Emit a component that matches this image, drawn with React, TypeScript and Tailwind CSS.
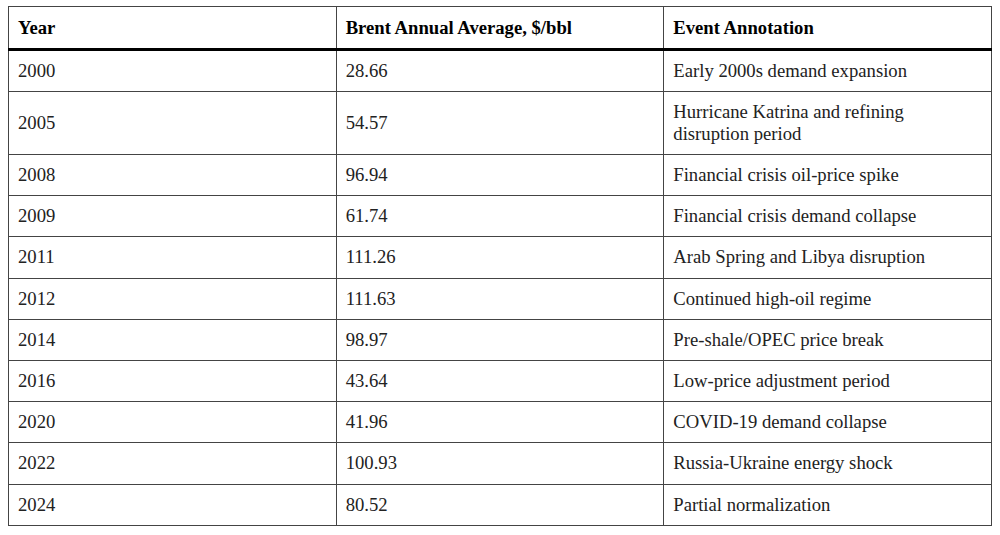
import React from "react";

const rows: [string, string, string][] = [
  ["2000", "28.66", "Early 2000s demand expansion"],
  ["2005", "54.57", "Hurricane Katrina and refining disruption period"],
  ["2008", "96.94", "Financial crisis oil-price spike"],
  ["2009", "61.74", "Financial crisis demand collapse"],
  ["2011", "111.26", "Arab Spring and Libya disruption"],
  ["2012", "111.63", "Continued high-oil regime"],
  ["2014", "98.97", "Pre-shale/OPEC price break"],
  ["2016", "43.64", "Low-price adjustment period"],
  ["2020", "41.96", "COVID-19 demand collapse"],
  ["2022", "100.93", "Russia-Ukraine energy shock"],
  ["2024", "80.52", "Partial normalization"],
];

export default function App() {
  return (
    <div
      className="w-[1000px] h-[535px] bg-white pl-[8px] pt-[6px]"
      style={{ fontFamily: '"Liberation Serif", "Times New Roman", serif' }}
    >
      <table className="w-[984px] border-collapse table-fixed text-[18.67px] leading-[22px] text-[#222]">
        <thead>
          <tr>
            <th className="border border-[#444] border-b-[3px] border-b-black text-left font-bold text-black h-[43px] px-[9px] py-0 align-middle">Year</th>
            <th className="border border-[#444] border-b-[3px] border-b-black text-left font-bold text-black h-[43px] px-[9px] py-0 align-middle">Brent Annual Average, $/bbl</th>
            <th className="border border-[#444] border-b-[3px] border-b-black text-left font-bold text-black h-[43px] px-[9px] py-0 align-middle">Event Annotation</th>
          </tr>
        </thead>
        <tbody>
          {rows.map(([y, v, e], i) => (
            <tr key={i}>
              <td className={`border border-[#444] px-[9px] py-[9px] align-middle ${i === 0 ? "h-[40.5px]" : "h-[41.2px]"}`}>{y}</td>
              <td className="border border-[#444] px-[9px] py-[9px] align-middle">{v}</td>
              <td className="border border-[#444] pl-[9px] pr-[14px] py-[9px] align-middle">{e}</td>
            </tr>
          ))}
        </tbody>
      </table>
    </div>
  );
}
